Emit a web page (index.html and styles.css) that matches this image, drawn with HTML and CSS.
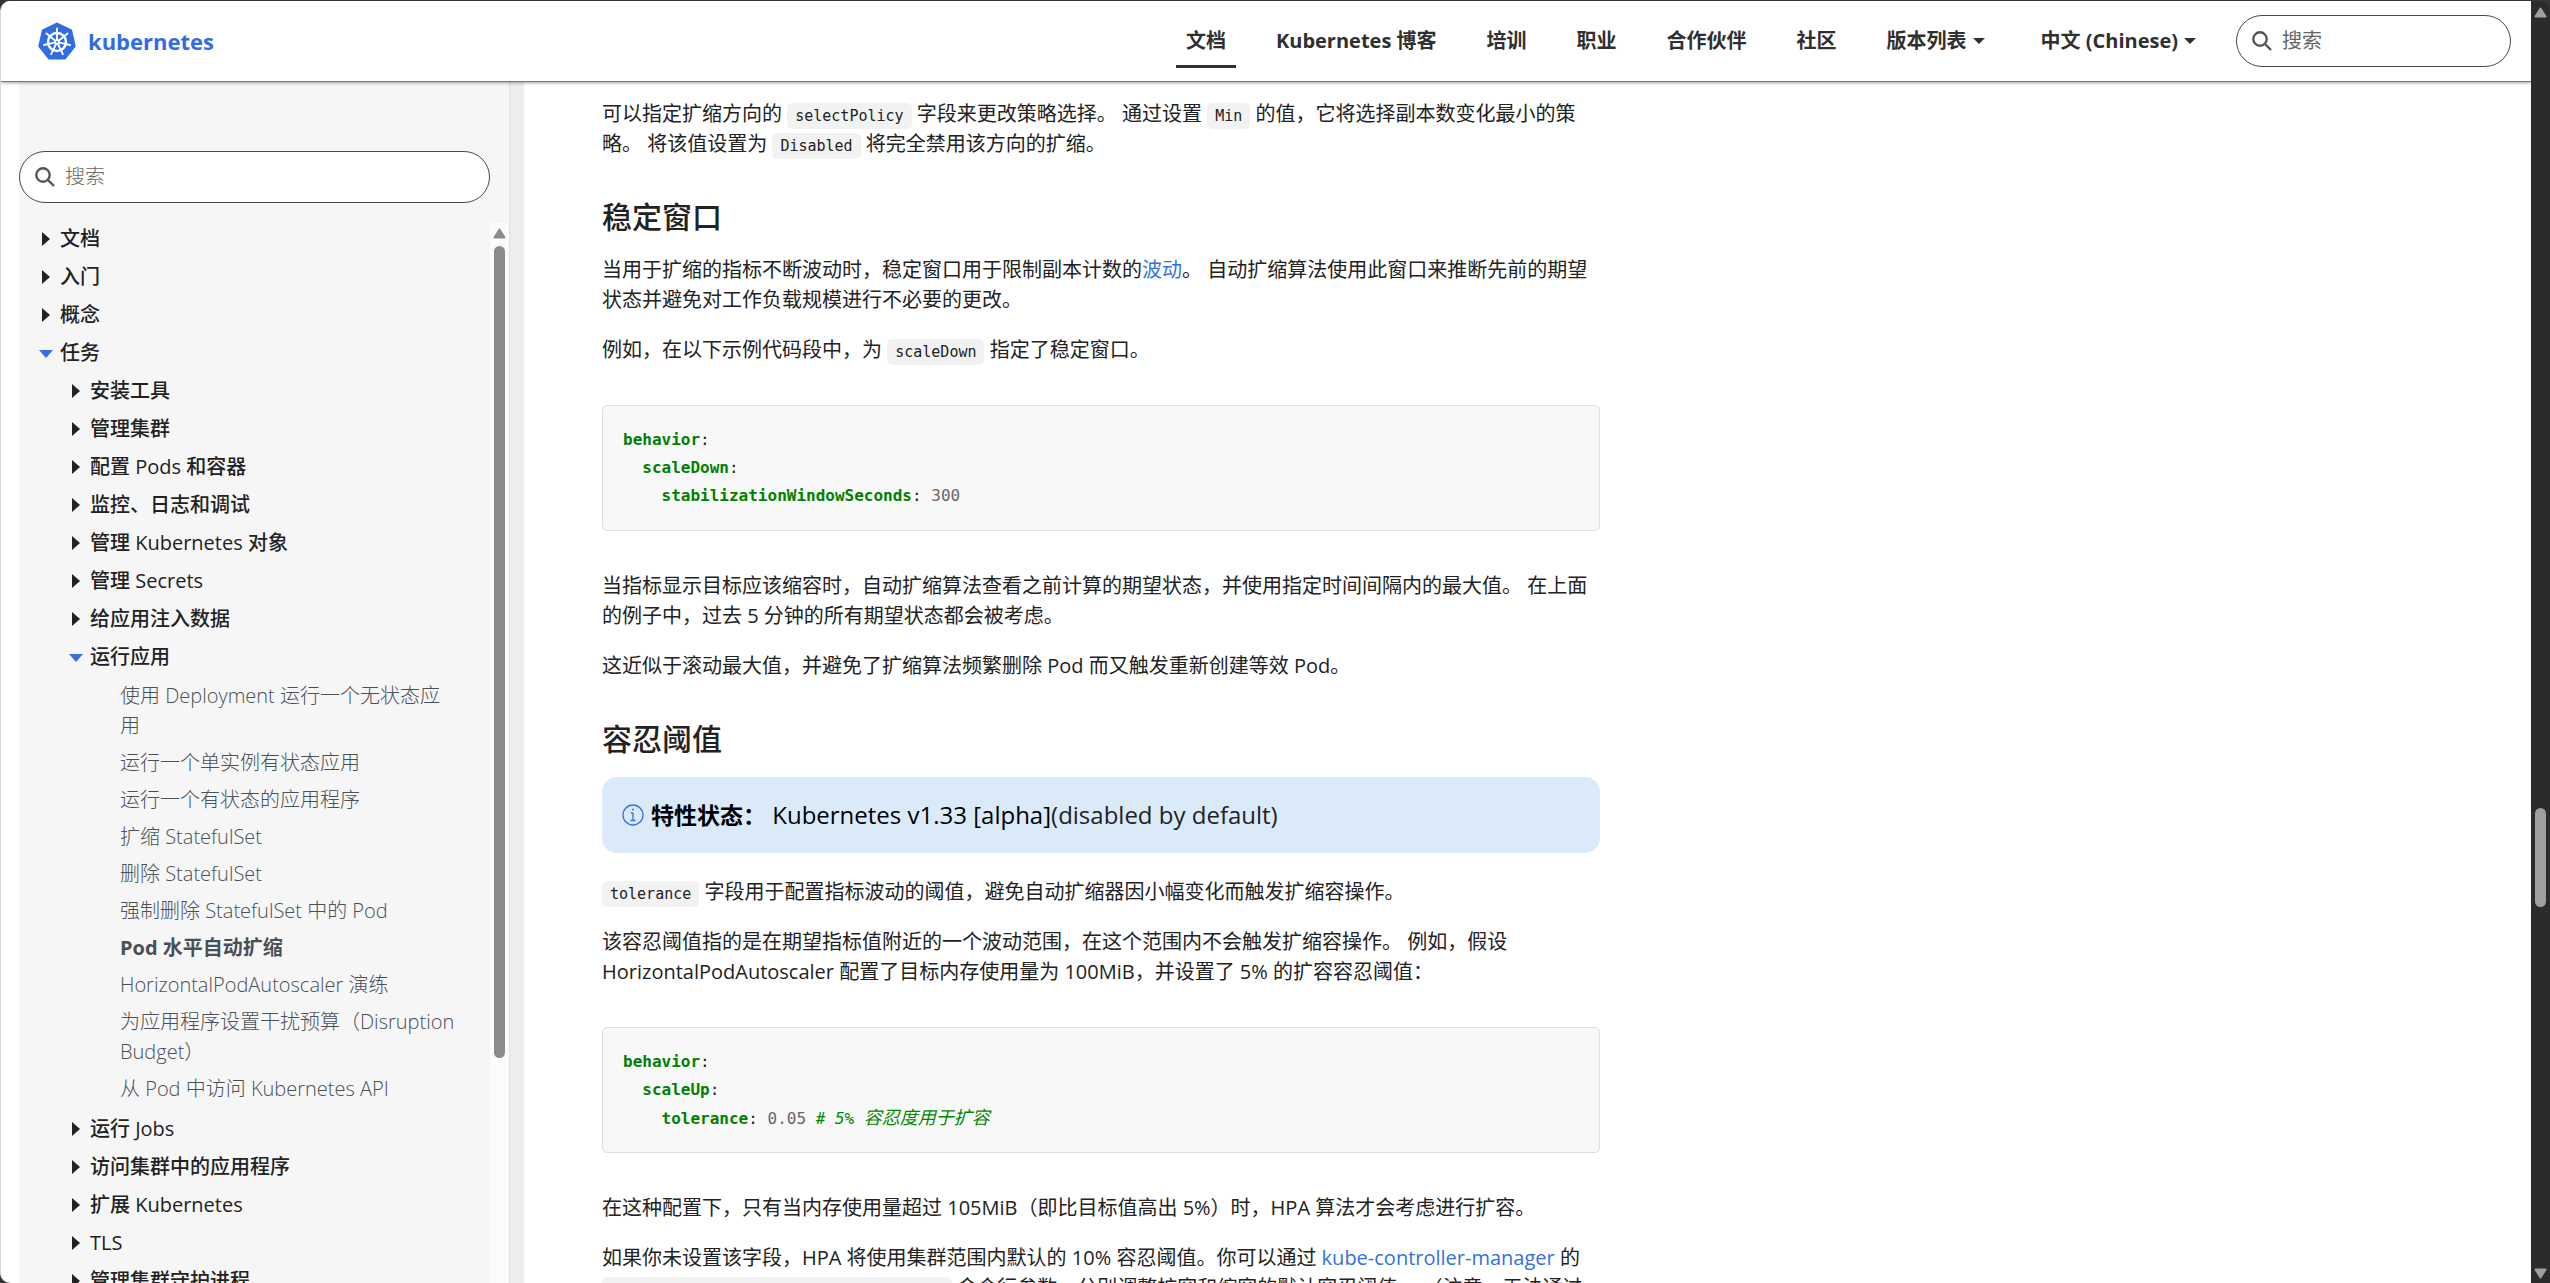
FILE: index.html
```html
<!DOCTYPE html>
<html lang="zh-CN">
<head>
    <meta charset="UTF-8">
    <meta name="viewport" content="width=device-width, initial-scale=1.0">
    <title>Pod 水平自动扩缩 | Kubernetes</title>
    <link rel="stylesheet" href="styles.css">
</head>
<body>
    <div class="page">
        <header class="navbar">
            <a class="brand" href="#">
                <svg class="brand-logo" viewBox="0 0 38 38" aria-hidden="true">
                    <path fill="#326ce5" d="M19 0.5 L33.2 7.2 Q34 7.7 34.2 8.6 L37.6 23.6 Q37.8 24.5 37.2 25.3 L27.8 37 Q27.2 37.5 26.3 37.5 L11.7 37.5 Q10.8 37.5 10.2 37 L0.8 25.3 Q0.2 24.5 0.4 23.6 L3.8 8.6 Q4 7.7 4.8 7.2 Z"/>
                    <g fill="none" stroke="#fff" stroke-linecap="round">
                        <circle cx="19" cy="20" r="9" stroke-width="2.4"/>
                        <g stroke-width="1.9">
                            <path d="M19 17.5V6.5"/>
                            <path d="M19 17.5V6.5" transform="rotate(51.43 19 20)"/>
                            <path d="M19 17.5V6.5" transform="rotate(102.86 19 20)"/>
                            <path d="M19 17.5V6.5" transform="rotate(154.29 19 20)"/>
                            <path d="M19 17.5V6.5" transform="rotate(205.71 19 20)"/>
                            <path d="M19 17.5V6.5" transform="rotate(257.14 19 20)"/>
                            <path d="M19 17.5V6.5" transform="rotate(308.57 19 20)"/>
                        </g>
                    </g>
                    <circle cx="19" cy="20" r="2.8" fill="#fff"/>
                    <circle cx="19" cy="20" r="1" fill="#326ce5"/>
                </svg>
                <span>kubernetes</span>
            </a>
            <nav class="main-nav">
                <a class="active" href="#">文档</a>
                <a href="#">Kubernetes 博客</a>
                <a href="#">培训</a>
                <a href="#">职业</a>
                <a href="#">合作伙伴</a>
                <a href="#">社区</a>
                <a class="dropdown" href="#">版本列表</a>
                <a class="dropdown" href="#">中文 (Chinese)</a>
            </nav>
            <label class="search search-top">
                <svg viewBox="0 0 20 20" aria-hidden="true"><circle cx="8" cy="8" r="6.7"/><path d="M13 13l6 6"/></svg>
                <input type="search" placeholder="搜索" aria-label="搜索">
            </label>
        </header>

        <div class="content">
            <aside class="sidebar">
                <label class="search">
                    <svg viewBox="0 0 20 20" aria-hidden="true"><circle cx="8" cy="8" r="6.7"/><path d="M13 13l6 6"/></svg>
                    <input type="search" placeholder="搜索" aria-label="搜索">
                </label>
                <div class="tree-wrap">
                    <ul class="tree">
                        <li><a class="folder" href="#">文档</a></li>
                        <li><a class="folder" href="#">入门</a></li>
                        <li><a class="folder" href="#">概念</a></li>
                        <li>
                            <a class="folder open" href="#">任务</a>
                            <ul>
                                <li><a class="folder" href="#">安装工具</a></li>
                                <li><a class="folder" href="#">管理集群</a></li>
                                <li><a class="folder" href="#">配置 Pods 和容器</a></li>
                                <li><a class="folder" href="#">监控、日志和调试</a></li>
                                <li><a class="folder" href="#">管理 Kubernetes 对象</a></li>
                                <li><a class="folder" href="#">管理 Secrets</a></li>
                                <li><a class="folder" href="#">给应用注入数据</a></li>
                                <li>
                                    <a class="folder open" href="#">运行应用</a>
                                    <ul>
                                        <li><a class="leaf" href="#">使用 Deployment 运行一个无状态应用</a></li>
                                        <li><a class="leaf" href="#">运行一个单实例有状态应用</a></li>
                                        <li><a class="leaf" href="#">运行一个有状态的应用程序</a></li>
                                        <li><a class="leaf" href="#">扩缩 StatefulSet</a></li>
                                        <li><a class="leaf" href="#">删除 StatefulSet</a></li>
                                        <li><a class="leaf" href="#">强制删除 StatefulSet 中的 Pod</a></li>
                                        <li><a class="leaf current" href="#">Pod 水平自动扩缩</a></li>
                                        <li><a class="leaf" href="#">HorizontalPodAutoscaler 演练</a></li>
                                        <li><a class="leaf" href="#">为应用程序设置干扰预算（Disruption Budget）</a></li>
                                        <li><a class="leaf" href="#">从 Pod 中访问 Kubernetes API</a></li>
                                    </ul>
                                </li>
                                <li><a class="folder" href="#">运行 Jobs</a></li>
                                <li><a class="folder" href="#">访问集群中的应用程序</a></li>
                                <li><a class="folder" href="#">扩展 Kubernetes</a></li>
                                <li><a class="folder" href="#">TLS</a></li>
                                <li><a class="folder" href="#">管理集群守护进程</a></li>
                            </ul>
                        </li>
                    </ul>
                    <div class="tree-scroll">
                        <svg viewBox="0 0 13 11" aria-hidden="true"><path d="M6.5 1.5L11.5 9.5H1.5Z"/></svg>
                        <div class="thumb"></div>
                    </div>
                </div>
            </aside>
            <div class="gutter"></div>

            <main class="doc">
                <p>可以指定扩缩方向的 <code>selectPolicy</code> 字段来更改策略选择。 通过设置 <code>Min</code> 的值，它将选择副本数变化最小的策略。 将该值设置为 <code>Disabled</code> 将完全禁用该方向的扩缩。</p>

                <h3>稳定窗口</h3>
                <p>当用于扩缩的指标不断波动时，稳定窗口用于限制副本计数的<a href="#">波动</a>。 自动扩缩算法使用此窗口来推断先前的期望状态并避免对工作负载规模进行不必要的更改。</p>
                <p>例如，在以下示例代码段中，为 <code>scaleDown</code> 指定了稳定窗口。</p>
                <div class="highlight">
                    <div class="line"><b>behavior</b><span>:</span></div>
                    <div class="line indent-1"><b>scaleDown</b><span>:</span></div>
                    <div class="line indent-2"><b>stabilizationWindowSeconds</b><span>: </span><span class="num">300</span></div>
                </div>
                <p>当指标显示目标应该缩容时，自动扩缩算法查看之前计算的期望状态，并使用指定时间间隔内的最大值。 在上面的例子中，过去 5 分钟的所有期望状态都会被考虑。</p>
                <p>这近似于滚动最大值，并避免了扩缩算法频繁删除 Pod 而又触发重新创建等效 Pod。</p>

                <h3>容忍阈值</h3>
                <div class="feature-state">
                    <svg viewBox="0 0 22 22" aria-hidden="true"><circle cx="11" cy="11" r="10"/><path d="M11 9v7.5M8.8 9H11M8.5 16.5h5"/><path class="dot" d="M11 5.4v.2"/></svg>
                    <div><strong>特性状态：</strong> <span class="version">Kubernetes v1.33 [alpha]</span>(disabled by default)</div>
                </div>
                <p><code>tolerance</code> 字段用于配置指标波动的阈值，避免自动扩缩器因小幅变化而触发扩缩容操作。</p>
                <p>该容忍阈值指的是在期望指标值附近的一个波动范围，在这个范围内不会触发扩缩容操作。 例如，假设 HorizontalPodAutoscaler 配置了目标内存使用量为 100MiB，并设置了 5% 的扩容容忍阈值：</p>
                <div class="highlight">
                    <div class="line"><b>behavior</b><span>:</span></div>
                    <div class="line indent-1"><b>scaleUp</b><span>:</span></div>
                    <div class="line indent-2"><b>tolerance</b><span>: </span><span class="num">0.05 </span><i># 5% </i><i class="zh">容忍度用于扩容</i></div>
                </div>
                <p>在这种配置下，只有当内存使用量超过 105MiB（即比目标值高出 5%）时，HPA 算法才会考虑进行扩容。</p>
                <p>如果你未设置该字段，HPA 将使用集群范围内默认的 10% 容忍阈值。你可以通过 <a href="#">kube-controller-manager</a> 的 <code>--horizontal-pod-autoscaler-tolerance</code> 命令行参数，分别调整扩容和缩容的默认容忍阈值。 （注意，无法通过</p>
            </main>
        </div>
    </div>

    <div class="page-scroll">
        <svg viewBox="0 0 13 11" aria-hidden="true"><path d="M6.5 1.5L11.5 9.5H1.5Z"/></svg>
        <div class="track"><div class="thumb"></div></div>
        <svg viewBox="0 0 13 11" aria-hidden="true"><path d="M6.5 9.5L11.5 1.5H1.5Z"/></svg>
    </div>
</body>
</html>
```
FILE: styles.css
```css
* {
    box-sizing: border-box;
}

body {
    margin: 0;
    padding-top: 1px;
    height: 100vh;
    display: flex;
    overflow: hidden;
    background-color: #353535;
    color: #222;
    font-family: "Open Sans", "Noto Sans CJK SC", sans-serif;
    font-size: 20px;
    line-height: 30px;
}

a {
    color: #3371e3;
    text-decoration: none;
}

.page {
    flex: 1;
    min-width: 0;
    display: flex;
    flex-direction: column;
    background-color: #fff;
    border-left: 1px solid #d8d8d8;
    border-radius: 10px 0 0 10px;
    overflow: hidden;
}

/* Header */
.navbar {
    position: relative;
    z-index: 1;
    flex: none;
    display: flex;
    align-items: center;
    height: 81px;
    padding: 0 20px 0 37px;
    border-bottom: 1px solid #777;
    box-shadow: 0 1px 3px rgba(0, 0, 0, 0.35);
    background-color: #fff;
}

.brand {
    display: flex;
    align-items: center;
    gap: 12px;
    color: #326ce5;
    font-size: 22px;
    font-weight: 700;
}

.brand-logo {
    width: 38px;
    height: 38px;
}

.main-nav {
    display: flex;
    gap: 30px;
    margin-left: auto;
    margin-right: 24px;
}

.main-nav a {
    display: flex;
    align-items: center;
    height: 54px;
    padding: 0 10px;
    border-bottom: 3px solid transparent;
    border-top: 3px solid transparent;
    color: #303030;
    font-weight: 700;
}

.main-nav a.active {
    border-bottom-color: #303030;
}

.main-nav a.dropdown {
    padding-right: 16px;
}

.dropdown::after {
    content: "";
    margin-left: 6px;
    border-top: 6px solid;
    border-left: 6px solid transparent;
    border-right: 6px solid transparent;
}

.search {
    display: flex;
    align-items: center;
    gap: 10px;
    height: 52px;
    padding: 0 15px;
    border: 1px solid #4a4a4a;
    border-radius: 26px;
    background-color: #fff;
}

.search svg {
    flex: none;
    width: 20px;
    height: 20px;
    fill: none;
    stroke: #555;
    stroke-width: 2.4;
}

.search input {
    flex: 1;
    min-width: 0;
    padding: 0;
    border: 0;
    outline: 0;
    background: none;
    font: inherit;
}

.search input::placeholder {
    color: #666;
}

.search-top {
    width: 275px;
}

/* Sidebar */
.content {
    flex: 1;
    min-height: 0;
    display: flex;
    padding-left: 18px;
}

.sidebar {
    flex: none;
    width: 491px;
    display: flex;
    flex-direction: column;
    padding-top: 69px;
    background-color: #f6f6f6;
    border-right: 1px solid #dee2e6;
}

.sidebar .search {
    flex: none;
    margin-right: 19px;
    font-weight: 300;
}

.tree-wrap {
    flex: 1;
    min-height: 0;
    display: flex;
    margin-top: 20px;
    overflow: hidden;
}

.tree {
    flex: 1;
}

.tree,
.tree ul {
    margin: 0;
    padding-left: 0;
    list-style: none;
}

.tree {
    padding-top: 1px;
    padding-right: 32px;
}

.tree ul {
    padding-left: 30px;
}

.tree ul ul {
    padding-top: 1px;
    padding-bottom: 3px;
}

.tree a {
    display: block;
    padding-bottom: 8px;
    padding-left: 41px;
}

.folder {
    position: relative;
    color: #222;
    font-weight: 500;
}

.folder::before {
    content: "";
    position: absolute;
    left: 23px;
    top: 8px;
    border-left: 8px solid;
    border-top: 7px solid transparent;
    border-bottom: 7px solid transparent;
}

.folder.open::before {
    left: 20px;
    top: 12px;
    border-top: 8px solid #3371e3;
    border-left: 7px solid transparent;
    border-right: 7px solid transparent;
    border-bottom: 0;
}

.tree .leaf {
    padding-bottom: 7px;
    color: #495057;
    font-weight: 300;
}

.tree .current {
    font-weight: 700;
}

.tree-scroll {
    flex: none;
    width: 19px;
    display: flex;
    flex-direction: column;
    align-items: center;
    gap: 7px;
    padding-top: 5px;
    background-color: #fcfcfc;
}

.tree-scroll svg,
.page-scroll svg {
    flex: none;
    width: 13px;
    height: 11px;
    fill: #8b8b8b;
    stroke: #8b8b8b;
    stroke-width: 2;
    stroke-linejoin: round;
}

.tree-scroll .thumb {
    width: 11px;
    height: 77%;
    border-radius: 6px;
    background-color: #8b8b8b;
}

.gutter {
    flex: none;
    width: 14px;
    background-color: #ededee;
}

/* Document */
.doc {
    max-width: 1076px;
    padding: 17px 0 0 78px;
}

.doc p {
    margin: 0 0 20px;
}

.doc h3 {
    margin: 40px 0 20px;
    font-size: 30px;
    font-weight: 500;
    line-height: 36px;
}

.doc code {
    padding: 4px 8px;
    border-radius: 5px;
    background-color: #f2f2f2;
    font-family: "DejaVu Sans Mono", "Noto Sans CJK SC", monospace;
    font-size: 15px;
    line-height: 20px;
}

.highlight {
    margin: 40px 0;
    padding: 20px;
    border: 1px solid #dedfe0;
    border-radius: 5px;
    background-color: #f8f8f8;
    font-family: "DejaVu Sans Mono", "Noto Sans CJK SC", monospace;
    font-size: 16px;
}

.highlight .line {
    height: 28px;
    line-height: 28px;
    white-space: pre;
}

.highlight .indent-1 {
    padding-left: 2ch;
}

.highlight .indent-2 {
    padding-left: 4ch;
}

.highlight b {
    color: #008000;
}

.highlight .num {
    color: #666;
}

.highlight i {
    color: #080;
}

.highlight .zh {
    font-size: 18px;
}

.feature-state {
    display: flex;
    align-items: center;
    gap: 7px;
    margin-bottom: 24px;
    padding: 20px;
    border-radius: 15px;
    background-color: #daeaf9;
    font-size: 24px;
    line-height: 36px;
}

.feature-state strong,
.feature-state .version {
    color: #000;
}

.feature-state strong {
    font-size: 23px;
}

.feature-state svg {
    width: 22px;
    height: 22px;
    fill: none;
    stroke: #3371e3;
    stroke-width: 1.3;
}

.feature-state .dot {
    stroke-width: 2;
    stroke-linecap: round;
}

/* Window scrollbar */
.page-scroll {
    flex: none;
    width: 19px;
    display: flex;
    flex-direction: column;
    align-items: center;
    padding: 6px 0 4px;
    border-radius: 0 10px 0 0;
    background-color: #2b2b2b;
}

.page-scroll svg {
    fill: #9f9f9f;
    stroke: #9f9f9f;
}

.page-scroll .track {
    flex: 1;
    width: 11px;
    padding-top: 790px;
}

.page-scroll .thumb {
    height: 99px;
    border-radius: 6px;
    background-color: #9f9f9f;
}
```
